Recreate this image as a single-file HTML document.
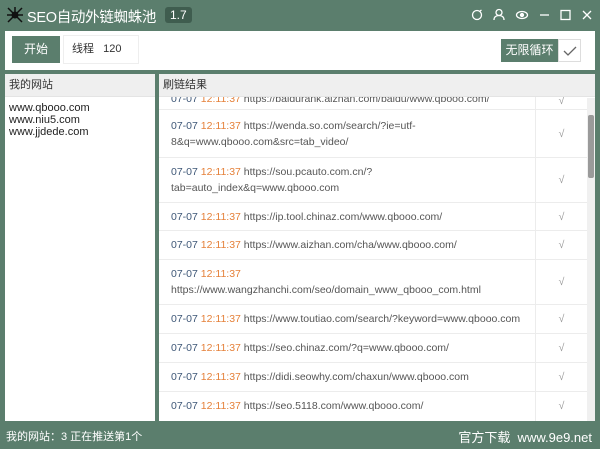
<!DOCTYPE html>
<html><head><meta charset="utf-8"><style>
*{margin:0;padding:0;box-sizing:border-box}
body{width:600px;height:449px;background:#5b7e6d;font-family:"Liberation Sans","Noto Sans CJK SC",sans-serif;position:relative;overflow:hidden;font-size:11px;color:#444}
.abs{position:absolute}
.title{left:27px;top:6px;color:#fff;font-size:14.5px;letter-spacing:-0.3px}
.ver{left:165px;top:7px;background:#3f5d4f;color:#fff;font-size:12px;padding:1px 5px;border-radius:3px}
.top{left:5px;top:31px;width:590px;height:39px;background:#fff}
.btn{left:7px;top:5px;width:48px;height:27px;background:#5b7e6d;color:#fff;text-align:center;line-height:27px;font-size:12px}
.thr{left:58px;top:4px;width:76px;height:29px;border:1px solid #eee;line-height:27px;padding-left:8px;font-size:11px;color:#333}
.loop{left:496px;top:8px;width:57px;height:23px;background:#5b7e6d;color:#fff;font-size:12px;line-height:23px;text-align:center}
.chk{left:553px;top:8px;width:23px;height:23px;border:1px solid #ddd}
.left{left:5px;top:74px;width:150px;height:347px;background:#fff}
.right{left:159px;top:74px;width:436px;height:347px;background:#fff;overflow:hidden}
.hd{position:relative;z-index:2;height:23px;background:#efefef;line-height:23px;padding-left:4px;font-size:11px;color:#333;border-bottom:1px solid #e4e4e4}
.sites{padding:5px 4px;line-height:12px;font-size:11px;color:#222}
.row{position:absolute;left:0;width:428px;border-bottom:1px solid #ececec;font-size:10.5px;line-height:16px;color:#555}
.row .t{position:absolute;left:12px;width:372px;white-space:nowrap}
.row .c{position:absolute;left:376px;width:52px;height:100%;border-left:1px solid #ececec;text-align:center;color:#999}
.d{color:#3e5777}.h{color:#e5813a}
.sb{left:428px;top:24px;width:8px;height:323px;background:#f0f0f0}
.th{left:429px;top:41px;width:6px;height:63px;background:#9a9a9a;border-radius:2px}
.foot{left:6px;top:428px;color:#fff;font-size:11px}
.foot2{right:8px;top:427px;color:#fff;font-size:13px}
</style></head><body>
<svg class="abs" style="left:5px;top:5px" width="20" height="20" viewBox="0 0 20 20"><g stroke="#111" stroke-width="1.5" fill="none"><path d="M10 10L3 3M10 10L17 3M10 10L2 10M10 10L18 10M10 10L3 17M10 10L17 17M10 10L10 2"/></g><circle cx="10" cy="10" r="3.5" fill="#111"/></svg>
<div class="abs title">SEO自动外链蜘蛛池</div>
<div class="abs ver">1.7</div>
<svg class="abs" style="left:470px;top:8px" width="125" height="14" viewBox="0 0 125 14" fill="none" stroke="#fff" stroke-width="1.3">
<circle cx="7" cy="7" r="4.5"/><path d="M10 3l1.5-1"/>
<circle cx="29" cy="4.5" r="3"/><path d="M24 12c0-3 2-4.5 5-4.5s5 1.5 5 4.5"/>
<ellipse cx="52" cy="7" rx="5.5" ry="3.5"/><circle cx="52" cy="7" r="1.5" fill="#fff"/>
<path d="M70 7h9"/>
<rect x="91" y="2.5" width="9" height="9"/>
<path d="M113 3l8 8M121 3l-8 8"/></svg>
<div class="abs top">
<div class="abs btn">开始</div>
<div class="abs thr">线程&nbsp;&nbsp;&nbsp;120</div>
<div class="abs loop">无限循环</div>
<div class="abs chk"><svg width="21" height="21" viewBox="0 0 21 21"><path d="M5 11l4 4 8-8" stroke="#666" stroke-width="1.3" fill="none"/></svg></div>
</div>
<div class="abs left"><div class="hd">我的网站</div><div class="sites">www.qbooo.com<br>www.niu5.com<br>www.jjdede.com</div></div>
<div class="abs right"><div class="hd">刷链结果</div>
<div class="row" style="top:6px;height:30px"><div class="t" style="top:11px"><span class="d">07-07</span> <span class="h">12:11:37</span> https://baidurank.aizhan.com/baidu/www.qbooo.com/</div><div class="c" style="line-height:42px">√</div></div>
<div class="row" style="top:36px;height:48px"><div class="t" style="top:8px"><span class="d">07-07</span> <span class="h">12:11:37</span> https://wenda.so.com/search/?ie=utf-<br>8&amp;q=www.qbooo.com&amp;src=tab_video/</div><div class="c" style="line-height:48px">√</div></div>
<div class="row" style="top:84px;height:45px"><div class="t" style="top:6px"><span class="d">07-07</span> <span class="h">12:11:37</span> https://sou.pcauto.com.cn/?<br>tab=auto_index&amp;q=www.qbooo.com</div><div class="c" style="line-height:45px">√</div></div>
<div class="row" style="top:129px;height:28px"><div class="t" style="top:6px"><span class="d">07-07</span> <span class="h">12:11:37</span> https://ip.tool.chinaz.com/www.qbooo.com/</div><div class="c" style="line-height:28px">√</div></div>
<div class="row" style="top:157px;height:29px"><div class="t" style="top:6px"><span class="d">07-07</span> <span class="h">12:11:37</span> https://www.aizhan.com/cha/www.qbooo.com/</div><div class="c" style="line-height:29px">√</div></div>
<div class="row" style="top:186px;height:45px"><div class="t" style="top:6px"><span class="d">07-07</span> <span class="h">12:11:37</span><br>https://www.wangzhanchi.com/seo/domain_www_qbooo_com.html</div><div class="c" style="line-height:45px">√</div></div>
<div class="row" style="top:231px;height:29px"><div class="t" style="top:6px"><span class="d">07-07</span> <span class="h">12:11:37</span> https://www.toutiao.com/search/?keyword=www.qbooo.com</div><div class="c" style="line-height:29px">√</div></div>
<div class="row" style="top:260px;height:29px"><div class="t" style="top:6px"><span class="d">07-07</span> <span class="h">12:11:37</span> https://seo.chinaz.com/?q=www.qbooo.com/</div><div class="c" style="line-height:29px">√</div></div>
<div class="row" style="top:289px;height:29px"><div class="t" style="top:6px"><span class="d">07-07</span> <span class="h">12:11:37</span> https://didi.seowhy.com/chaxun/www.qbooo.com</div><div class="c" style="line-height:29px">√</div></div>
<div class="row" style="top:318px;height:29px;border-bottom:none"><div class="t" style="top:6px"><span class="d">07-07</span> <span class="h">12:11:37</span> https://seo.5118.com/www.qbooo.com/</div><div class="c" style="line-height:29px">√</div></div>
<div class="abs sb"></div><div class="abs th"></div>
</div>
<div class="abs foot">我的网站：3 正在推送第1个</div>
<div class="abs foot2">官方下载&nbsp;&nbsp;www.9e9.net</div>
</body></html>
